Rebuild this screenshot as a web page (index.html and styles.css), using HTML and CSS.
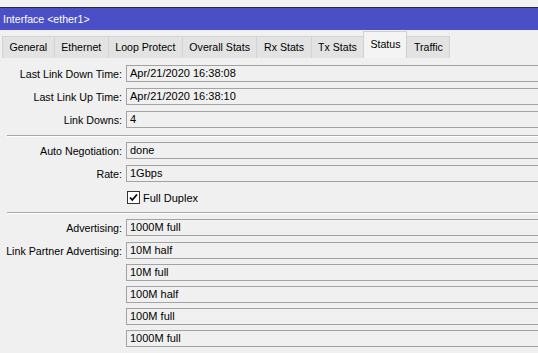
FILE: index.html
```html
<!DOCTYPE html>
<html lang="en">
  <head>
    <meta charset="UTF-8" />
    <title>Interface &lt;ether1&gt;</title>
    <link rel="stylesheet" href="styles.css">
  </head>
  <body>
    <div class="top-strip"></div>
    <div class="title-bar">Interface &lt;ether1&gt;</div>

    <div class="tabs">
      <div class="tab">General</div>
      <div class="tab">Ethernet</div>
      <div class="tab">Loop Protect</div>
      <div class="tab">Overall Stats</div>
      <div class="tab">Rx Stats</div>
      <div class="tab">Tx Stats</div>
      <div class="tab active">Status</div>
      <div class="tab">Traffic</div>
    </div>

    <div class="content">
      <div class="row">
        <div class="label">Last Link Down Time:</div>
        <div class="field">Apr/21/2020 16:38:08</div>
      </div>
      <div class="row gap6">
        <div class="label">Last Link Up Time:</div>
        <div class="field">Apr/21/2020 16:38:10</div>
      </div>
      <div class="row gap6">
        <div class="label">Link Downs:</div>
        <div class="field">4</div>
      </div>

      <div class="separator sep-a"></div>

      <div class="row gap5">
        <div class="label">Auto Negotiation:</div>
        <div class="field">done</div>
      </div>
      <div class="row gap6">
        <div class="label">Rate:</div>
        <div class="field">1Gbps</div>
      </div>
      <div class="row check-row">
        <div class="label"></div>
        <div class="checkbox">
          <svg width="11" height="11" viewBox="0 0 11 11">
            <path d="M2 5.5 L4.3 8 L9 2.5" fill="none" stroke="#000" stroke-width="1.8"/>
          </svg>
        </div>
        <span class="check-text">Full Duplex</span>
      </div>

      <div class="separator sep-b"></div>

      <div class="row gap5">
        <div class="label">Advertising:</div>
        <div class="field">1000M full</div>
      </div>
      <div class="row gap6">
        <div class="label">Link Partner Advertising:</div>
        <div class="field">10M half</div>
      </div>
      <div class="row gap5">
        <div class="label"></div>
        <div class="field">10M full</div>
      </div>
      <div class="row gap5">
        <div class="label"></div>
        <div class="field">100M half</div>
      </div>
      <div class="row gap5">
        <div class="label"></div>
        <div class="field">100M full</div>
      </div>
      <div class="row gap5">
        <div class="label"></div>
        <div class="field">1000M full</div>
      </div>
    </div>
  </body>
</html>
```

FILE: styles.css
```css
body {
  margin: 0;
  background: #f0f0f0;
  font-family: "Liberation Sans", Arial, sans-serif;
  font-size: 11px;
  color: #000;
  overflow: hidden;
}

.top-strip {
  height: 7px;
  background: #f2f2f2;
  border-bottom: 1px solid #2a2a2a;
}

.title-bar {
  height: 22px;
  line-height: 22px;
  padding-left: 3px;
  background: #4b4fc5;
  color: #fff;
  font-size: 10.6px;
}

.tabs {
  display: flex;
  align-items: flex-end;
  height: 28px;
  padding-left: 2px;
}

.tab {
  height: 21px;
  line-height: 21px;
  padding: 0 6.5px;
  background: #e3e3e3;
  border: 1px solid #d3d3d3;
  border-bottom: none;
  margin-right: -1px;
  font-size: 10.6px;
}

.tab.active {
  height: 26px;
  line-height: 24px;
  padding: 0 6px;
  background: #f4f4f4;
  border-color: #cfcfcf;
  position: relative;
  z-index: 1;
}

.content {
  padding-top: 7px;
}

.row {
  display: flex;
  align-items: center;
  height: 17px;
}

.gap5 { margin-top: 5px; }
.gap6 { margin-top: 6px; }

.label {
  width: 122px;
  margin-right: 4px;
  text-align: right;
  white-space: nowrap;
  flex-shrink: 0;
  font-size: 10.7px;
}

.field {
  flex: 1;
  height: 15px;
  line-height: 15px;
  padding-left: 3px;
  border: 1px solid #a3a3a3;
  border-right: none;
  white-space: nowrap;
}

.separator {
  margin-left: 7px;
  border-top: 1px solid #a8a8a8;
  border-bottom: 1px solid #fff;
}

.sep-a { margin-top: 7px; }
.sep-b { margin-top: 6px; }

.check-row {
  margin-top: 7px;
}

.checkbox {
  width: 11px;
  height: 11px;
  margin-left: 1px;
  border: 1px solid #333;
  background: #fff;
  display: flex;
}

.check-text {
  margin-left: 3px;
}
```
